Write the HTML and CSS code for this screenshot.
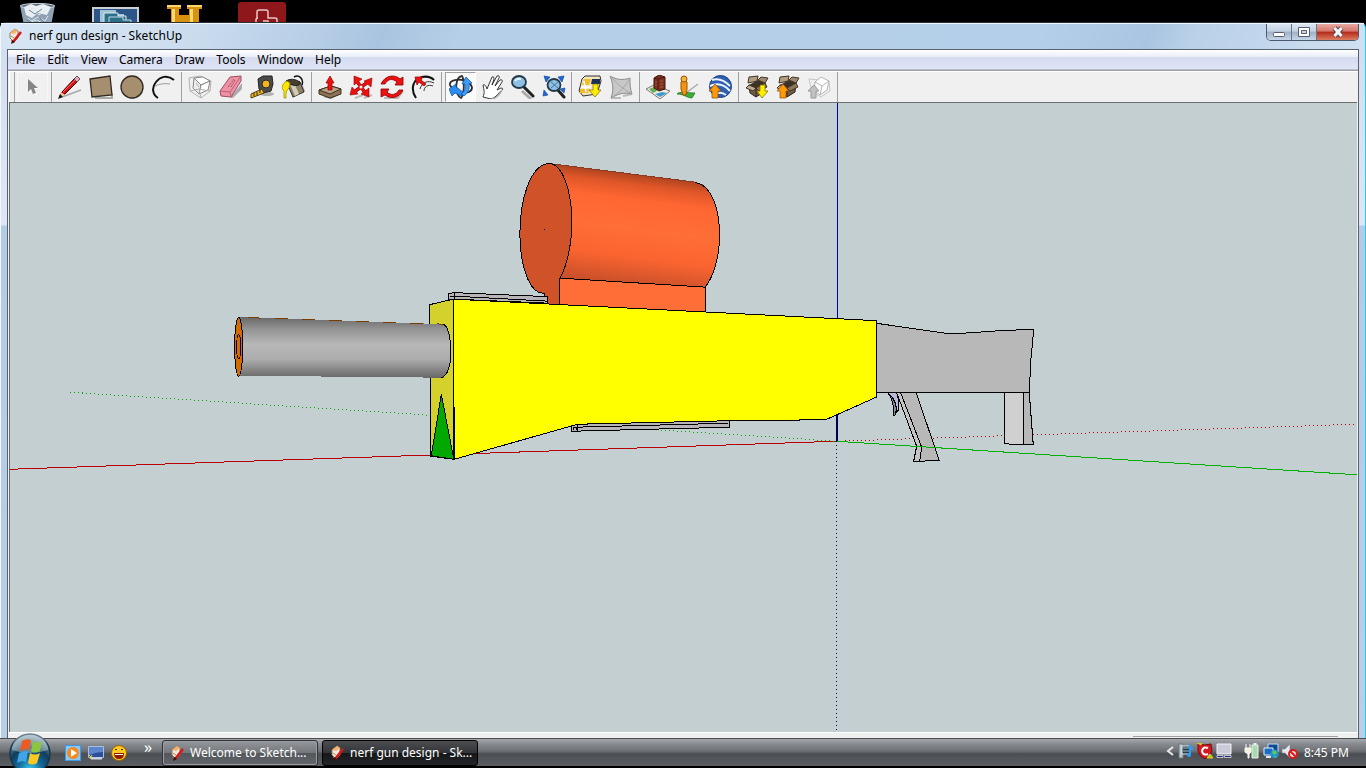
FILE: index.html
```html
<!DOCTYPE html>
<html lang="en">
<head>
    <meta charset="UTF-8">
    <meta name="viewport" content="width=device-width, initial-scale=1.0">
    <title>nerf gun design - SketchUp</title>
    <link rel="stylesheet" href="styles.css">
</head>
<body>
    <!-- Desktop icons behind the window -->
    <div class="desktop">
        <svg class="desk-icon" viewBox="0 0 48 24">
            <path d="M1 3 L36 3 L32 24 L5 24Z" fill="#8fa3b5"/>
            <ellipse cx="18.500" cy="4" rx="17" ry="2.500" fill="#5b6b7b" stroke="#cdd8e2"/>
            <path d="M5 5 L12 2 L17 4 L24 2 L32 5 L28 13 L19 11 L13 16 L7 13Z" fill="#e9eef3"/>
            <path d="M8 9 L15 6 L20 13 L27 8 M9 16l3 3 7-4 7 4 3-5M12 20l6-2 5 3" stroke="#dfe7ee" fill="none"/>
            <path d="M10 8l6 4 7-5M8 18l6 3M20 15l6 6" stroke="#6f8395" fill="none"/>
        </svg>
        <svg class="desk-icon" viewBox="0 0 48 24">
            <rect x="1" y="6" width="45" height="22" fill="#2d5588" stroke="#c9d0d6" stroke-width="2"/>
            <path d="M8 8h16v4h8v12H8z" fill="#9fc4d6"/>
            <path d="M12 11h14v3h8v10H12z" fill="#2c6f86" stroke="#dcebf2"/>
            <path d="M17 15h14v3h8v8H17z" fill="#2c6f86" stroke="#bcd9e4"/>
        </svg>
        <svg class="desk-icon" viewBox="0 0 48 24">
            <path d="M2 3h14v4h-2v6h10V7h-2V3h15v4h-3v17H6V7H2z" fill="#d9920f"/>
            <path d="M2 3h14v2H2zM22 3h15v2H22zM7 7h3v17H7zM25 7h3v17h-3z" fill="#ffd76a"/>
        </svg>
        <svg class="desk-icon" viewBox="0 0 48 24">
            <rect x="0" y="0" width="48" height="32" rx="3" fill="#8e171b"/>
            <path d="M18 22v-4q0-2 2-2h-1V10q0-2 2-2h7q2 0 2 2v6h7q2 0 2 2v4M30 22v-3h-5" fill="none" stroke="#e8c8c8" stroke-width="1.500"/>
        </svg>
    </div>

    <!-- Application window -->
    <div class="window">
        <header class="titlebar">
            <svg class="app-icon" viewBox="0 0 16 16"><use href="#i-app"/></svg>
            <h1>nerf gun design - SketchUp</h1>
            <div class="caption">
                <button type="button" aria-label="Minimize"><svg viewBox="0 0 24 16"><rect x="6.500" y="8.500" width="11" height="4" rx="1" fill="#fff" stroke="#565d70"/></svg></button>
                <button type="button" aria-label="Maximize"><svg viewBox="0 0 24 16"><path d="M6.500 3.500h11v9h-11z" fill="#fff" stroke="#565d70"/><path d="M9.500 6.500h5v3h-5z" fill="#c9d4e4" stroke="#565d70"/></svg></button>
                <button type="button" class="close" aria-label="Close"><svg viewBox="0 0 24 16"><path d="M8.500 4l7 8M15.500 4l-7 8" stroke="#5b4456" stroke-width="5"/><path d="M8.500 4l7 8M15.500 4l-7 8" stroke="#f4f4f4" stroke-width="3"/></svg></button>
            </div>
        </header>
        <div class="client">
            <nav class="menu">
                <a href="#">File</a>
                <a href="#">Edit</a>
                <a href="#">View</a>
                <a href="#">Camera</a>
                <a href="#">Draw</a>
                <a href="#">Tools</a>
                <a href="#">Window</a>
                <a href="#">Help</a>
            </nav>
            <div class="toolbar">
                <div class="group first">
                    <button type="button" class="focus" aria-label="Select"><svg viewBox="0 0 24 24"><path d="M8 5v13l3-3 2 5 3-1-2-5h4z" fill="#fff"/><path d="M7 4v13l3-3 2 5 3-1-2-5h4z" fill="#868686"/></svg></button>
                </div>
                <div class="group">
                    <button type="button" aria-label="Line"><svg viewBox="0 0 24 24"><path d="M4 22L23 15" stroke="#a8a8a8" stroke-width="1.500"/><path d="M2 21L4 17 17 3 20 6 7 19z" fill="#e01010" stroke="#300"/><path d="M5 17L17 5" stroke="#ff6b5b"/><path d="M16 4l3-3 3 3-3 3z" fill="#f4a3b4" stroke="#555"/><path d="M1 23l2-6 4 3z" fill="#e8c998"/><path d="M0 24l2-5 3 3z" fill="#111"/></svg></button>
                    <button type="button" aria-label="Rectangle"><svg viewBox="0 0 24 24"><path d="M6 23h17v-4" stroke="#aaa" stroke-width="2" fill="none"/><path d="M1 4L21 1 23 20 3 22z" fill="#a68f6f" stroke="#302a22" stroke-width="1.300"/></svg></button>
                    <button type="button" aria-label="Circle"><svg viewBox="0 0 24 24"><circle cx="13" cy="13.500" r="10.500" fill="#aaa"/><circle cx="12" cy="12" r="11" fill="#a68f6f" stroke="#302a22" stroke-width="1.300"/></svg></button>
                    <button type="button" aria-label="Arc"><svg viewBox="0 0 24 24"><path d="M2 13C5 9 14 8 19 9" stroke="#999" fill="none"/><path d="M23 5C16-1 9 2 5 7 0 13 2 20 7 23" fill="none" stroke="#111" stroke-width="2"/></svg></button>
                </div>
                <div class="group">
                    <button type="button" aria-label="Make Component"><svg viewBox="0 0 24 24"><path d="M1 3l11-2 11 5-1 10-9 7L2 16z" fill="none" stroke="#b0b0b0"/><path d="M6 3l9-1 7 4-9 4z" fill="#fff" stroke="#888"/><path d="M6 3l7 7-2 9-6-6z" fill="#ececec" stroke="#888"/><path d="M13 10l9-4-2 9-9 4z" fill="#fff" stroke="#888"/><path d="M8 8l3 4M2 16l9-2 11 2M13 23l-2-9" fill="none" stroke="#b0b0b0"/></svg></button>
                    <button type="button" aria-label="Eraser"><svg viewBox="0 0 24 24"><path d="M11 23l12-15v6l-9 9z" fill="#aaa"/><path d="M1 16L11 2l11-1v5L12 22 2 21z" fill="#f092a5" stroke="#9c4f5d"/><path d="M1 16l10 1L22 1M11 17l1 5" fill="none" stroke="#b8647a"/><path d="M9 12l6-8M12 12l4-7" stroke="#9c4f5d" stroke-dasharray="2 1"/></svg></button>
                    <button type="button" aria-label="Tape Measure"><svg viewBox="0 0 24 24"><ellipse cx="17" cy="19" rx="7" ry="2" fill="#b2b2b2"/><path d="M8 4l5-3h9l1 8-2 7-8 2-4-4z" fill="#4a4a4c" stroke="#222"/><circle cx="16" cy="9" r="4" fill="#f2b51d" stroke="#2a2a2a"/><path d="M12 14L1 19v4l13-5z" fill="#f5b821" stroke="#4a3a10"/><path d="M4 18v3M7 17v3M10 15v3" stroke="#222"/></svg></button>
                    <button type="button" aria-label="Paint Bucket"><svg viewBox="0 0 24 24"><path d="M11 23l13-7-3-7z" fill="#999"/><path d="M5 6l14 1 4 10-11 5z" fill="#8b7f66" stroke="#333"/><path d="M9 9l5 1 4 9-4 2z" fill="#d4cbb6"/><path d="M5 6q6-4 14 1l-1 3q-7 2-13-4z" fill="#46402c" stroke="#222"/><path d="M13 2c5-3 10 2 8 8" fill="none" stroke="#111" stroke-width="1.500"/><path d="M6 6C1 8 0 14 3 16v7h2c0-6 0-7 3-10l1-5z" fill="#ffe600" stroke="#9a8500" stroke-width=".7"/></svg></button>
                </div>
                <div class="group">
                    <button type="button" aria-label="Push/Pull"><svg viewBox="0 0 24 24"><path d="M5 22l8 2 10-5v-4z" fill="#999"/><path d="M1 15l12-4 10 3v5l-11 4-11-4z" fill="#8b7156" stroke="#40311f"/><path d="M1 15l11 4 11-5-10-3z" fill="#b7a083" stroke="#40311f"/><path d="M10 15V8H8l4-7 4 7h-2v7z" fill="#ee1111" stroke="#900" stroke-width=".7"/></svg></button>
                    <button type="button" aria-label="Move"><svg viewBox="0 0 24 24"><path d="M6 23l8-3M15 23l8-3" stroke="#bbb" stroke-width="2"/><path d="M7 5l10 14M19 7L5 17" stroke="#8c0000" stroke-width="3.500"/><g fill="#ee1111" stroke="#8c0000" stroke-width=".6"><path d="M5 1l8 3-8 6z"/><path d="M23 3l-1 9-7-6z"/><path d="M20 22l-8-3 8-6z"/><path d="M1 20l2-8 6 7z"/></g><path d="M7 5l10 14M19 7L5 17" stroke="#ee1111" stroke-width="2.300"/><circle cx="12" cy="12" r="1.500" fill="#f0f0f0"/></svg></button>
                    <button type="button" aria-label="Rotate"><svg viewBox="0 0 24 24"><path d="M4 23h14l5-7" fill="none" stroke="#bbb" stroke-width="2"/><g fill="#ee1111" stroke="#8c0000" stroke-width=".8"><path d="M1 9C5 0 15-1 20 4l3-2v8h-8l2-3C12 3 8 4 5 9z"/><path d="M23 15c-4 9-13 9-18 5l-4 2v-8h8l-2 3c4 4 9 3 12-2z"/></g></svg></button>
                    <button type="button" aria-label="Offset"><svg viewBox="0 0 24 24"><path d="M5 23C-1 14 2 4 11 2c5-1 9 0 12 3" fill="none" stroke="#111" stroke-width="2"/><path d="M13 16c0-4 4-7 9-5M9 14C11 7 17 5 23 8" fill="none" stroke="#333"/><path d="M4 2h8l-2 3 5 4-2 2-5-4-2 3z" fill="#ee1111" stroke="#8c0000" stroke-width=".7"/></svg></button>
                </div>
                <div class="group camera">
                    <button type="button" class="pressed" aria-label="Orbit"><svg viewBox="0 0 24 24"><path d="M13 1C6 2 5 19 12 23c3-3 4-17 1-22z" fill="none" stroke="#333" stroke-width="1.800"/><path d="M19 7C9 2 0 6 1 10c2 6 14 9 19 7 5-3 3-7-1-10z" fill="none" stroke="#2b2b33" stroke-width="1.800"/><path d="M0 14l7-5v3c4 2 5 4 7 5l-1 4c-3-1-5-2-7-3l-3 3z" fill="#2a8cf0" stroke="#0d4f9e" stroke-width=".7"/><path d="M17 2l6 6-3 1c1 5-1 9-5 12l-3-2c4-3 5-6 4-10h-3z" fill="#3a9cf8" stroke="#0d4f9e" stroke-width=".7"/></svg></button>
                    <button type="button" aria-label="Pan"><svg viewBox="0 0 24 24"><path d="M3 22c2-5 1-6 0-12 2-1 3 1 4 4l5-12c2-1 2 1 2 2l-2 6 5-9c2-1 3 1 2 2l-4 8 5-6c2-1 3 1 2 2l-5 8 4-2c2 0 2 1 1 2-4 3-5 7-11 9z" fill="#fff" stroke="#222" stroke-width=".9"/><path d="M12 24c5-1 8-5 10-9" fill="none" stroke="#aaa" stroke-width="1.500"/></svg></button>
                    <button type="button" aria-label="Zoom"><svg viewBox="0 0 24 24"><path d="M11 16l9 8" stroke="#aaa" stroke-width="3"/><path d="M13 12l9 9" stroke="#222" stroke-width="3" stroke-linecap="round"/><ellipse cx="8" cy="7" rx="7" ry="6" fill="#8dc0e4" stroke="#24394a" stroke-width="1.800"/><path d="M4 6q2-3 6-2" stroke="#e5f5ff" stroke-width="2" fill="none"/></svg></button>
                    <button type="button" aria-label="Zoom Extents"><svg viewBox="0 0 24 24"><path d="M15 14l7 8" stroke="#222" stroke-width="3" stroke-linecap="round"/><ellipse cx="12" cy="10" rx="6.500" ry="6" fill="#8dc0e4" stroke="#24394a" stroke-width="1.800"/><path d="M9 7l7 6M16 7l-7 6" stroke="#4c7896"/><path d="M2 1l6 1-4 5zM22 1l-6 1 4 5zM1 21l1-6 4 5zM23 13l-5 1 4 4z" fill="#1c68d8" stroke="#0d3e8c" stroke-width=".6"/></svg></button>
                </div>
                <div class="group">
                    <button type="button" aria-label="Get Current View"><svg viewBox="0 0 24 24"><path d="M4 4l3-3h15l1 5-4 13-14 2-4-5z" fill="#f1e6bf" stroke="#333"/><path d="M6 4h7l-2 6H4zM2 14h9l-1 4H2z" fill="#f0bc28"/><path d="M14 4h8v5h-9z" fill="#1b2f55"/><path d="M3 12h10M6 6l2 11" stroke="#fff" stroke-width="1.500"/><path d="M15 9h5v6h3l-6 7-6-7h4z" fill="#ffee00" stroke="#7b6900" stroke-width=".7"/></svg></button>
                    <button type="button" aria-label="Toggle Terrain"><svg viewBox="0 0 24 24"><path d="M2 23h10M14 21l9-2" stroke="#bbb" stroke-width="2"/><path d="M1 1c5 3 12 5 20 2 0 6 0 11 2 16-8-2-14 0-21 4 3-8 2-15-1-22z" fill="#c8c8c8" stroke="#8c8c8c"/><path d="M1 1c6 7 13 13 22 18M21 3C16 12 10 18 2 23" fill="none" stroke="#a8a8a8"/></svg></button>
                </div>
                <div class="group">
                    <button type="button" aria-label="Add New Building"><svg viewBox="0 0 24 24"><path d="M0 14l8-4 16 6-10 8z" fill="#f2eedb" stroke="#777"/><path d="M3 14l5-2 3 4-4 2z" fill="#63ad54"/><path d="M9 19l7-2 5 1-7 4z" fill="#3b9bd1"/><path d="M8 3l5-3 6 2v12l-6 2-5-3z" fill="#7b3020" stroke="#401509"/><path d="M12 4v11M8 3l4 1 7-2" stroke="#4e1a0f" fill="none"/><path d="M14 6h3M14 9h3M14 12h3M9 7h2M9 10h2" stroke="#a85c42"/></svg></button>
                    <button type="button" aria-label="Photo Textures"><svg viewBox="0 0 24 24"><path d="M9 18L21 9" stroke="#aaa" stroke-width="1.500"/><path d="M0 19c3-3 9-1 18-1l-3 5c-5 0-8-4-15-4z" fill="#3cae3a" stroke="#1b701c" stroke-width=".7"/><path d="M4 7q3-3 6 0v7l-1 6H6l-2-6z" fill="#f09412" stroke="#9d5200"/><circle cx="7" cy="4" r="3" fill="#f5b341" stroke="#9d5200"/></svg></button>
                    <button type="button" aria-label="Preview in Google Earth"><svg viewBox="0 0 24 24"><circle cx="12.500" cy="11.500" r="11" fill="#2f5fb3" stroke="#183c80"/><path d="M4 5q9-3 18 6M2 11q11-5 20 5M8 19q5-3 10 1" fill="none" stroke="#eef4fb" stroke-width="2"/><path d="M4 23v-7H1l6-7 6 7h-3v7z" fill="#ff9a0a" stroke="#8b4d00" stroke-width=".7"/></svg></button>
                </div>
                <div class="group">
                    <button type="button" aria-label="Get Models"><svg viewBox="0 0 24 24"><use href="#i-box"/><path d="M15 10h5v6h3l-6 7-5-7h3z" fill="#ffee00" stroke="#7b6900" stroke-width=".7"/></svg></button>
                    <button type="button" aria-label="Share Model"><svg viewBox="0 0 24 24"><use href="#i-box"/><path d="M4 23v-7H1l6-7 6 7h-3v7z" fill="#ff9a0a" stroke="#8b4d00" stroke-width=".7"/></svg></button>
                    <button type="button" aria-label="Share Component"><svg viewBox="0 0 24 24"><path d="M2 4l20 2 1 10-9 6-9-5z" fill="none" stroke="#c8c8c8"/><path d="M8 7l6-5 8 4-2 9-7 5-6-5z" fill="#fff" stroke="#b5b5b5"/><path d="M8 7l7 4 7-5M15 11l-2 9" fill="none" stroke="#b5b5b5"/><path d="M4 23v-7H1l6-6 5 6H9v7z" fill="#c2c2c2" stroke="#999"/></svg></button>
                </div>
            </div>

            <!-- Model view -->
            <main class="view">
                <svg class="model" viewBox="10 104 1346 628" preserveAspectRatio="xMinYMin meet" role="img" aria-label="Nerf gun model">
                    <defs>
                        <linearGradient id="barrel" x1="0" y1="0" x2="0" y2="1">
                            <stop offset="0" stop-color="#686868"/>
                            <stop offset=".2" stop-color="#949494"/>
                            <stop offset=".45" stop-color="#b8b8b8"/>
                            <stop offset=".7" stop-color="#acacac"/>
                            <stop offset="1" stop-color="#686868"/>
                        </linearGradient>
                        <linearGradient id="drum" gradientUnits="userSpaceOnUse" x1="634" y1="174" x2="620" y2="284">
                            <stop offset="0" stop-color="#a8421e"/>
                            <stop offset=".1" stop-color="#df5628"/>
                            <stop offset=".24" stop-color="#ff6632"/>
                            <stop offset=".5" stop-color="#ff6e37"/>
                            <stop offset=".75" stop-color="#fb6430"/>
                            <stop offset="1" stop-color="#c9502a"/>
                        </linearGradient>
                    </defs>
                    <!-- Axes -->
                    <g fill="none" shape-rendering="crispEdges">
                        <path d="M10 470L836 442" stroke="#b80000"/>
                        <path d="M836 442L1356 425" stroke="#b80000" stroke-dasharray="1 3"/>
                        <path d="M70 393L836 442" stroke="#00a800" stroke-dasharray="1 3"/>
                        <path d="M836.500 104V330" stroke="#0000b8"/>
                        <path d="M836 410V442" stroke="#000050" stroke-width="2"/>
                        <path d="M835.500 442V732" stroke="#000090" stroke-dasharray="1 3"/>
                    </g>
                    <g stroke="#000" shape-rendering="crispEdges">
                        <!-- Stock, grip and trigger -->
                        <path d="M875 324L948 334.500 963 334 1007 331 1033 330.500 1030 362 1028.500 393.500H875z" fill="#b8b8b8"/>
                        <path d="M1003.500 393.500V444l9 1.500h10v-52z" fill="#d0d0d0"/>
                        <path d="M1022.500 393.500v52h10l-4-52z" fill="#b8b8b8"/>
                        <path d="M896 393.500h4L921 448l-2 14h-6l3-15z" fill="#c4c4c4"/>
                        <path d="M900 393.500h15.500L938.500 461l-19.500 1 2-14z" fill="#b8b8b8"/>
                        <path d="M887 393.500h9q3 10 2 17l-5 6q3-14-6-23z" fill="#b8b8dc"/>
                        <path d="M887 393.500q11 9 8 22l-2 1q1-15-6-23z" fill="#8888a0"/>
                        <!-- Drum -->
                        <path d="M549 164.500L697 183.500C711 186 719 210 719 236 719 258 713 280 704.500 288L560 279z" fill="url(#drum)" stroke="none"/>
                        <path d="M549 164.500L694 183" fill="none" stroke="#8a3b1f"/>
                        <path d="M694 183.500C711 185 719 210 719 236 719 258 713 278 704.500 288" fill="none"/>
                        <path d="M559.500 279L704.500 288V313L559.500 306z" fill="#ff6e37"/>
                        <path d="M549 164.500C563 165 571.500 195 571.500 222 571.500 246 566 268 559.500 279V306L547.500 305 547 299 544.500 297V294.500L538 293C527 288 519.500 262 519.500 235 519.500 200 530 165 549 164.500z" fill="#cf5229"/>
                        <path d="M544 230.500h1"/>
                        <!-- Rails -->
                        <path d="M448.500 294.500L454 293.500 547 297.500V304L453 300 448.500 300z" fill="#b8b4b8"/>
                        <path d="M450 297h4l93 5M454 294v6" fill="none"/>
                        <path d="M570.500 427L578 424 728.500 421V428L571 432z" fill="#b8b4b8"/>
                        <path d="M574 428L727 424M577.500 426v6M573 431v-3h3v3" fill="none"/>
                        <!-- Body -->
                        <path d="M429.500 305.500L453 300 453.500 460 430.500 457z" fill="#d4d02c"/>
                        <path d="M441 395L431 456.500 453.500 460z" fill="#00a800"/>
                        <path d="M453 300L875.500 321.500V398L825 420.500 728 421.500 577 425 454 460z" fill="#ff0"/>
                        <!-- Barrel -->
                        <path d="M239 318L443 325C448 327 450.500 340 450.500 352 450.500 365 448 376 443 378.500L239 376.500z" fill="url(#barrel)" stroke="none"/>
                        <path d="M248 318.500L443 325" fill="none" stroke="#7a3d00" stroke-dasharray="13 14"/>
                        <path d="M443 325C448 327 450.500 340 450.500 352 450.500 365 448 376 441 378.500" fill="none"/>
                        <ellipse cx="238.500" cy="347.500" rx="4" ry="29.500" fill="#d46a00"/>
                        <ellipse cx="238.500" cy="347.500" rx="2" ry="12" fill="#d46a00"/>
                    </g>
                    <path d="M836 442L1356 475.500" stroke="#00b000" shape-rendering="crispEdges"/>
                </svg>
            </main>
            <div class="status"><span></span></div>
        </div>
    </div>

    <!-- Taskbar -->
    <footer class="taskbar">
        <button type="button" class="start" aria-label="Start">
            <svg viewBox="0 0 42 42">
                <defs>
                    <radialGradient id="orb" cx=".5" cy=".9" r=".85">
                        <stop offset="0" stop-color="#3fd0f0"/>
                        <stop offset=".35" stop-color="#126a9c"/>
                        <stop offset=".65" stop-color="#123c58"/>
                        <stop offset="1" stop-color="#8fa9b8"/>
                    </radialGradient>
                </defs>
                <circle cx="21" cy="21" r="20" fill="url(#orb)" stroke="#17384c" stroke-width="1.500"/>
                <path d="M3 17a18 18 0 0 1 36 0q-18 6-36 0z" fill="#fff" opacity=".35"/>
                <path d="M13 8q5-3 9-1l-2 10q-5-2-9 1z" fill="#ee5a24"/>
                <path d="M24 8q4 3 9 0l-2 10q-5 3-9 0z" fill="#8cc63f"/>
                <path d="M10 20q5-3 9-1l-2 10q-5-2-9 1z" fill="#3fa4e8"/>
                <path d="M21 20q5 3 10 0l-3 10q-5 3-9 0z" fill="#ffc91f"/>
            </svg>
        </button>
        <div class="quick">
            <svg viewBox="0 0 16 16"><path d="M0 0h16v16H0z" fill="#3b9be6"/><path d="M1 1h14v14H1z" fill="#8bc8f5"/><circle cx="8" cy="8" r="6" fill="#f58a1b"/><path d="M6 4l6 4-6 4z" fill="#fff"/></svg>
            <svg viewBox="0 0 16 16"><path d="M.5 1.500h15v11H.5z" fill="#2a4f98" stroke="#a9c0dd"/><path d="M1 2h14v5q-7 0-14 3z" fill="#5d85cd"/><path d="M3 13.500h11" stroke="#cfd8e2" stroke-width="2"/><path d="M1 10l3 3M4 10l-2 4" stroke="#f3d54b"/></svg>
            <svg viewBox="0 0 16 16"><circle cx="8" cy="8" r="7.500" fill="#ffcb1f" stroke="#a66300"/><path d="M3 8h10q0 6-5 6T3 8z" fill="#8c1c00"/><path d="M4 9h8v1H4z" fill="#fff"/><path d="M4 5q1-2 2 0M10 5q1-2 2 0" stroke="#4c2a00" fill="none"/></svg>
        </div>
        <span class="more">»</span>
        <button type="button" class="task"><svg class="app-icon" viewBox="0 0 16 16"><use href="#i-app"/></svg>Welcome to Sketch...</button>
        <button type="button" class="task active"><svg class="app-icon" viewBox="0 0 16 16"><use href="#i-app"/></svg>nerf gun design - Sk...</button>
        <div class="tray">
            <svg class="chevron" viewBox="0 0 8 16"><path d="M7 4L2 8l5 4" fill="none" stroke="#e8e8e8" stroke-width="2"/></svg>
            <svg viewBox="0 0 16 16"><path d="M1 1h4v14H1z" fill="#bfc8c8" stroke="#6e7878"/><path d="M4 3h8v8H4z" fill="#283c48" stroke="#dcebf2"/><path d="M5 5h6M5 8h6" stroke="#9bc"/><path d="M12 13V3l3 4" fill="none" stroke="#2ba0f0" stroke-width="2"/><circle cx="11" cy="12" r="2" fill="#2ba0f0"/></svg>
            <svg viewBox="0 0 16 16"><path d="M1 1l7 1 6-1 1 7q-1 5-7 8-6-3-7-8z" fill="#d41920" stroke="#7b0a0e"/><path d="M11 5q-5-2-6 3 1 5 6 3" fill="none" stroke="#fff" stroke-width="2"/><path d="M0 0l4 2 1-2M10 15l3-4 3 4z" fill="#9bd72a" stroke="#e6c91c"/></svg>
            <svg class="wide" viewBox="0 0 16 16"><path d="M1 1h14v10H1z" fill="#c9cbd9" stroke="#f4f4fa"/><path d="M1 12.500h6v2H1zM8.500 12.500H15v2H8.500z" fill="#1c2274" stroke="#fff" stroke-width=".7"/></svg>
            <svg viewBox="0 0 16 16"><path d="M8 2h6v13H8z" fill="#a8dcae" stroke="#eee"/><path d="M9.500 0h3v2h-3z" fill="#eee"/><path d="M1 5h6v4L5 11v4H4v-4L1 9zM2 1v4M6 1v4" fill="#f3f3d8" stroke="#f8f8f8"/></svg>
            <svg viewBox="0 0 16 16"><path d="M5 1h10v8H5z" fill="#124a91" stroke="#bfe0ff"/><path d="M1 5h9v7H1z" fill="#1d6cc4" stroke="#e2f1ff"/><path d="M3 14h5" stroke="#dfe9f2" stroke-width="2"/><circle cx="11.500" cy="11" r="4.300" fill="#238fd8"/><path d="M9 9l3-2 2 3-3 2zM11 13l3 0-2 2z" fill="#5ecf49"/></svg>
            <svg viewBox="0 0 16 16"><path d="M0 6h3l5-5v14l-5-5H0z" fill="#e5e9ee" stroke="#7c8590" stroke-width=".6"/><circle cx="11" cy="11" r="4" fill="#f0dada" stroke="#d61c1c" stroke-width="2"/><path d="M8 8l6 6" stroke="#d61c1c" stroke-width="2"/></svg>
            <time>8:45 PM</time>
        </div>
    </footer>

    <!-- Shared icons -->
    <svg class="sprite">
        <symbol id="i-app" viewBox="0 0 16 16">
            <path d="M2 5l5-4 3 2v7l-4 4-4-4z" fill="#f1e8dc" stroke="#8d7660"/>
            <path d="M2 5l5-4 3 2-4 3z" fill="#f3b26b"/>
            <path d="M3 8l3 2M3 12l3 2" stroke="#b78a5b"/>
            <path d="M5 14L13 4" stroke="#d81616" stroke-width="2.500"/>
            <path d="M3 16l1-4 3 2z" fill="#331008"/>
        </symbol>
        <symbol id="i-box" viewBox="0 0 24 24">
            <path d="M4 10l7 3 9-5-1 9-8 5-6-4z" fill="#6e5c48" stroke="#2f261b"/>
            <path d="M11 13v9" stroke="#2f261b"/>
            <path d="M4 10l9-5 7 3-9 5z" fill="#3b3125"/>
            <path d="M3 8l1-6 9-1-1 5z" fill="#b59d80" stroke="#3f3325"/>
            <path d="M13 5l3-3 7 1-3 5z" fill="#a08a6f" stroke="#3f3325"/>
            <path d="M4 10l7 3-3 3-7-3z" fill="#c2ab8d" stroke="#3f3325"/>
            <path d="M11 13l9-5 2 4-8 4z" fill="#8c7860" stroke="#3f3325"/>
        </symbol>
    </svg>
</body>
</html>
```
FILE: styles.css
```css
* {
    box-sizing: border-box;
}
body {
    margin: 0;
    height: 100vh;
    display: flex;
    flex-direction: column;
    overflow: hidden;
    background-color: #000;
    font-family: "Noto Sans", "Open Sans", sans-serif;
    font-size: 12px;
    color: #000;
}
button {
    border: 0;
    padding: 0;
    background: none;
    font: inherit;
}
.sprite {
    display: none;
}

/* Desktop */
.desktop {
    height: 22px;
    display: flex;
    gap: 25px;
    padding: 2px 19px 0;
    overflow: hidden;
}
.desk-icon {
    width: 48px;
    height: 24px;
    flex: none;
}

/* Window */
.window {
    flex: 1;
    min-height: 0;
    display: flex;
    flex-direction: column;
    padding: 0 6px 0 7px;
    border: 1px solid #26323e;
    border-width: 1px 1px 0 0;
    border-right-color: #19d0f0;
    border-radius: 6px 6px 0 0;
    background: linear-gradient(#d0def0, #dfe5f5 202px, #b4cbe6 203px, #b9cfe8);
    box-shadow: inset 1px 1px #f2f7fc;
}
.titlebar {
    height: 26px;
    display: flex;
    align-items: center;
    margin: 0 -5px 0 -6px;
    padding: 0 0 2px 7px;
    border-top: 1px solid #f2f7fc;
    background: linear-gradient(115deg, #d8e6f5 0, #cfdff0 150px, #b8cfe7 280px, #a9c4e0 350px, #b6cfe8 420px, #b4cfe9 76%, #aac5e1 84%, #b9d0e8 87%, #cfe0f2);
}
.titlebar h1 {
    margin: 0 auto 0 5px;
    font-size: 12px;
    font-weight: normal;
}
.app-icon {
    width: 16px;
    height: 16px;
    flex: none;
}
.caption {
    display: flex;
    align-self: flex-start;
    height: 17px;
    border: 1px solid #4d5a6c;
    border-top: 0;
    border-radius: 0 0 5px 5px;
    overflow: hidden;
    margin-right: 5px;
}
.caption button {
    width: 25px;
    border-right: 1px solid #65758a;
    background: linear-gradient(#dbe6f2, #c3d1e2 45%, #9fb1c8 50%, #c5d5e7);
}
.caption .close {
    width: 41px;
    border: 0;
    background: linear-gradient(#e8aba2, #d5766a 45%, #b32a18 50%, #dc7c60);
}
.caption svg {
    display: block;
    width: 24px;
    height: 16px;
    margin: 0 auto;
}
.client {
    flex: 1;
    min-height: 0;
    display: flex;
    flex-direction: column;
    border: 1px solid #59636f;
    border-bottom: 0;
    background-color: #f0f0f0;
}

/* Menu and toolbar */
.menu {
    height: 20px;
    display: flex;
    gap: 12px;
    padding-left: 8px;
    line-height: 20px;
    border-bottom: 1px solid #b6bcd0;
    background: linear-gradient(#fff, #eaeef8 35%, #d5dbef 40%, #e0e5f6);
}
.menu a {
    color: #000;
    text-decoration: none;
}
.toolbar {
    height: 32px;
    display: flex;
    align-items: center;
    border-top: 1px solid #a0a0a0;
    background-color: #f0f0f0;
    box-shadow: inset 0 1px #fff;
}
.group {
    display: flex;
    height: 30px;
    padding: 0 3px 0 2px;
    border-right: 1px solid #a0a0a0;
}
.first {
    margin-left: 1px;
    padding-left: 7px;
    border-left: 1px solid #fff;
    box-shadow: inset 4px 0 #f0f0f0, inset 5px 0 #a0a0a0;
}
.camera {
    padding: 0 2px 0 3px;
}
.toolbar button {
    width: 31px;
    height: 30px;
}
.toolbar svg {
    display: block;
    width: 24px;
    height: 24px;
    margin: 0 auto;
}
.toolbar .focus {
    border: 1px dotted #fff;
}
.toolbar .pressed {
    border: 1px solid #a0a0a0;
    border-right-color: #fff;
    border-bottom-color: #fff;
    background-color: #fafafa;
}

/* Model view */
.view {
    flex: 1;
    min-height: 0;
    margin: 0 1px 0 1px;
    border-top: 1px solid #6b6f70;
    border-left: 1px solid #6b6f70;
    background-color: #c4cfd1;
}
.model {
    display: block;
    width: 100%;
    height: 100%;
}
.status {
    height: 6px;
    padding-top: 3px;
    background-color: #f0f0f0;
    border-top: 1px solid #fff;
}
.status span {
    display: block;
    width: 205px;
    height: 2px;
    margin: 0 20px 0 auto;
    border-top: 1px solid #a0a0a0;
}

/* Taskbar */
.taskbar {
    height: 30px;
    display: flex;
    align-items: center;
    padding: 0 17px 0 9px;
    border-top: 1px solid #4a4d50;
    border-bottom: 2px solid #000;
    background: linear-gradient(#a4a7ab, #85888c 20%, #6c6f74 45%, #4b4f54 55%, #5b5f64);
    color: #fff;
}
.start {
    width: 42px;
    height: 42px;
    margin: 3px 14px 0 0;
    z-index: 1;
}
.start svg {
    display: block;
}
.quick {
    display: flex;
    gap: 7px;
}
.quick svg, .tray svg {
    width: 16px;
    height: 16px;
}
.more {
    width: 35px;
    padding: 0 0 12px 17px;
    font-size: 16px;
    line-height: 16px;
}
.task {
    width: 156px;
    height: 26px;
    display: flex;
    align-items: center;
    gap: 4px;
    margin-right: 4px;
    padding-left: 7px;
    border: 1px solid #2f3236;
    border-radius: 3px;
    background: linear-gradient(#94979b, #74777c 48%, #53575c 52%, #64686d);
    box-shadow: inset 0 0 0 1px #9a9da1;
    color: #fff;
    white-space: nowrap;
}
.task.active {
    background: linear-gradient(#4b4d50, #333538 48%, #151719 52%, #232528);
    border-color: #000;
    box-shadow: none;
}
.tray {
    display: flex;
    align-items: center;
    gap: 3px;
    margin-left: auto;
}
.tray .chevron {
    width: 8px;
    margin-right: 1px;
}
.tray .wide {
    margin-right: 9px;
}
.tray svg {
    margin-bottom: 3px;
}
.tray time {
    margin-left: 3px;
}
```
